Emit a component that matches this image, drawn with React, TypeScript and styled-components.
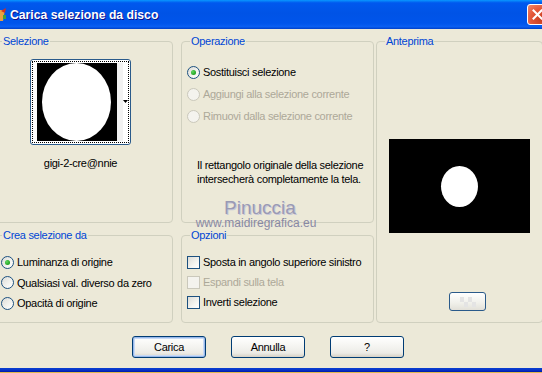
import React from "react";
import styled, { createGlobalStyle } from "styled-components";

const Global = createGlobalStyle`
  html, body { margin: 0; padding: 0; background: #ECE9D8; overflow: hidden; }
  body { width: 542px; height: 373px; font-family: "Liberation Sans", Arial, sans-serif; font-size: 11px; letter-spacing: -0.3px; color: #000; }
  * { box-sizing: border-box; }
`;

const Window = styled.div`
  width: 542px;
  height: 373px;
  display: flex;
  flex-direction: column;
`;

const TitleBar = styled.div`
  height: 29px;
  flex: none;
  display: flex;
  align-items: center;
  background: linear-gradient(#0997ff 0%, #0058ee 10%, #0053e6 45%, #0055eb 80%, #0a5ff2 92%, #0040c8 100%);
  overflow: hidden;
`;

const AppIcon = styled.svg`
  margin-left: -9px;
  flex: none;
`;

const Title = styled.div`
  margin-left: 3px;
  flex: 1;
  color: #fff;
  font-family: "Liberation Sans", Arial, sans-serif;
  font-weight: bold;
  font-size: 12.2px;
  letter-spacing: 0;
  text-shadow: 1px 1px 0 #0f1089;
`;

const CloseBtn = styled.div`
  width: 21px;
  height: 21px;
  margin-right: -6px;
  flex: none;
  border: 1px solid #fff;
  border-radius: 3px;
  background: radial-gradient(circle at 70% 75%, #c83e1f 0%, #e4583a 55%, #f08a6c 100%);
  display: flex;
  align-items: center;
  justify-content: center;
`;

const Body = styled.div`
  flex: 1;
  position: relative;
  padding-top: 6px;
`;

const GroupsRow = styled.div`
  display: flex;
`;

const Column = styled.div<{ $w: number; $ml: number }>`
  width: ${(p) => p.$w}px;
  margin-left: ${(p) => p.$ml}px;
  display: flex;
  flex-direction: column;
  gap: 6px;
  flex: none;
`;

const Group = styled.fieldset<{ $h: number; $pt?: number; $pl?: number }>`
  margin: 0;
  height: ${(p) => p.$h}px;
  border: 1px solid #d0d0bf;
  border-radius: 4px;
  padding: ${(p) => p.$pt ?? 0}px 0 0 ${(p) => p.$pl ?? 0}px;
  min-width: 0;
`;

const Legend = styled.legend`
  color: #0046d5;
  margin-left: 8px;
  padding: 0 1px;
  line-height: 13px;
  font-size: 11px;
`;

const ThumbWrap = styled.div`
  width: 101px;
  margin-left: 36px;
  display: flex;
  flex-direction: column;
  align-items: center;
`;

const Thumb = styled.div`
  width: 101px;
  height: 86px;
  border: 1px solid #2a5a8a;
  border-radius: 3px;
  background: #fff;
  padding: 1px;
`;

const Focus = styled.div`
  width: 97px;
  height: 82px;
  border: 1px dotted #000;
`;

const ThumbName = styled.div`
  margin-top: 11px;
  line-height: 14px;
`;

const OptRow = styled.label<{ $h: number; $disabled?: boolean }>`
  display: flex;
  align-items: center;
  gap: 3px;
  height: ${(p) => p.$h}px;
  color: ${(p) => (p.$disabled ? "#aca899" : "#000")};
  white-space: nowrap;
`;

const Radio = styled.span<{ $checked?: boolean; $disabled?: boolean }>`
  width: 13px;
  height: 13px;
  flex: none;
  border-radius: 50%;
  border: 1px solid ${(p) => (p.$disabled ? "#cac8bb" : "#1c5180")};
  background: ${(p) =>
    p.$disabled ? "#f4f3ee" : "linear-gradient(135deg, #dcdcd7 0%, #f4f4f0 60%, #ffffff 100%)"};
  display: flex;
  align-items: center;
  justify-content: center;
  &::after {
    content: "";
    display: ${(p) => (p.$checked ? "block" : "none")};
    width: 5px;
    height: 5px;
    border-radius: 50%;
    background: radial-gradient(circle at 35% 35%, #5ed85e 0%, #21a121 70%);
  }
`;

const Check = styled.span<{ $disabled?: boolean }>`
  width: 13px;
  height: 13px;
  flex: none;
  border: 1px solid ${(p) => (p.$disabled ? "#cac8bb" : "#1c5180")};
  background: ${(p) =>
    p.$disabled ? "#f4f3ee" : "linear-gradient(135deg, #dcdcd7 0%, #f4f4f0 60%, #ffffff 100%)"};
`;

const Description = styled.div`
  margin-top: 31px;
  margin-left: 15px;
  line-height: 14px;
`;

const OptList = styled.div<{ $pl: number }>`
  padding-left: ${(p) => p.$pl}px;
`;

const Preview = styled.svg`
  display: block;
  margin: 91px 0 0 12px;
`;

const SmallBtn = styled.div`
  width: 37px;
  height: 19px;
  margin: 59px 0 0 72px;
  border: 1px solid #2a5a8a;
  border-radius: 3px;
  background: linear-gradient(#ffffff, #f0f0ea 60%, #e2e0d8);
  display: flex;
  align-items: center;
  justify-content: center;
`;

const ButtonRow = styled.div`
  display: flex;
  gap: 25px;
  margin: 13px 0 0 132px;
`;

const Button = styled.button<{ $default?: boolean }>`
  width: 74px;
  height: 22px;
  padding: 0;
  font-family: "Liberation Sans", Arial, sans-serif;
  font-size: 11px;
  letter-spacing: -0.3px;
  color: #000;
  border: 1px solid #003c74;
  border-radius: 3px;
  background: linear-gradient(#ffffff 0%, #f6f6f3 40%, #ecebe6 80%, #d6d0c5 100%);
  box-shadow: ${(p) => (p.$default ? "inset 0 0 0 1px #98b8ea, inset 0 0 0 2px #c8daf5" : "none")};
`;

const Watermark = styled.div`
  position: absolute;
  left: 195px;
  top: 169px;
  display: flex;
  flex-direction: column;
  align-items: center;
  width: 122px;
  pointer-events: none;
  letter-spacing: 0;
`;

const WmName = styled.div`
  font-family: "Liberation Sans", Arial, sans-serif;
  font-size: 19px;
  line-height: 20px;
  color: #9a9ab4;
  text-shadow: 1px 1px 0 #c8c8d8;
  margin-left: 8px;
`;

const WmSite = styled.div`
  font-family: "Liberation Sans", Arial, sans-serif;
  font-size: 12px;
  line-height: 11px;
  color: #8888a4;
`;

const BottomFrame = styled.div`
  height: 5px;
  flex: none;
  background: linear-gradient(#0a3fd0 0%, #0733c8 40%, #0019a8 80%, #e0b850 80%, #e0b850 100%);
`;

export default function App() {
  return (
    <Window>
      <Global />
      <TitleBar>
        <AppIcon width="16" height="16" viewBox="0 0 16 16">
          <path d="M2 3 L14 3 L12 14 L4 14 Z" fill="#e8a040" />
          <path d="M10 4 L15 1 L14 6 Z" fill="#d03020" />
          <rect x="12" y="8" width="3" height="4" fill="#3aa040" />
        </AppIcon>
        <Title>Carica selezione da disco</Title>
        <CloseBtn>
          <svg width="11" height="11" viewBox="0 0 11 11">
            <path d="M1.5 1.5 L9.5 9.5 M9.5 1.5 L1.5 9.5" stroke="#fff" strokeWidth="2" strokeLinecap="square" />
          </svg>
        </CloseBtn>
      </TitleBar>
      <Body>
        <GroupsRow>
          <Column $w={180} $ml={-7}>
            <Group $h={188} $pt={11}>
              <Legend>Selezione</Legend>
              <ThumbWrap>
                <Thumb>
                  <Focus>
                    <svg width="95" height="80" viewBox="0 0 95 80">
                      <rect x="4" y="1" width="80" height="78" fill="#000" />
                      <ellipse cx="43.5" cy="40" rx="34.5" ry="39" fill="#fff" />
                      <rect x="84" y="1" width="6" height="78" fill="#f2f2f2" />
                      <path d="M90 38 L95 38 L92.5 41 Z" fill="#000" />
                    </svg>
                  </Focus>
                </Thumb>
                <ThumbName>gigi-2-cre@nnie</ThumbName>
              </ThumbWrap>
            </Group>
            <Group $h={94} $pt={10}>
              <Legend>Crea selezione da</Legend>
              <OptList $pl={7}>
                <OptRow $h={20}>
                  <Radio $checked />
                  Luminanza di origine
                </OptRow>
                <OptRow $h={21}>
                  <Radio />
                  Qualsiasi val. diverso da zero
                </OptRow>
                <OptRow $h={20}>
                  <Radio />
                  Opacità di origine
                </OptRow>
              </OptList>
            </Group>
          </Column>
          <Column $w={193} $ml={8}>
            <Group $h={188} $pt={13}>
              <Legend>Operazione</Legend>
              <OptList $pl={5}>
                <OptRow $h={22}>
                  <Radio $checked />
                  Sostituisci selezione
                </OptRow>
                <OptRow $h={22} $disabled>
                  <Radio $disabled />
                  Aggiungi alla selezione corrente
                </OptRow>
                <OptRow $h={22} $disabled>
                  <Radio $disabled />
                  Rimuovi dalla selezione corrente
                </OptRow>
              </OptList>
              <Description>
                Il rettangolo originale della selezione
                <br />
                intersecherà completamente la tela.
              </Description>
            </Group>
            <Group $h={94} $pt={10}>
              <Legend>Opzioni</Legend>
              <OptList $pl={5}>
                <OptRow $h={20}>
                  <Check />
                  Sposta in angolo superiore sinistro
                </OptRow>
                <OptRow $h={20} $disabled>
                  <Check $disabled />
                  Espandi sulla tela
                </OptRow>
                <OptRow $h={20}>
                  <Check />
                  Inverti selezione
                </OptRow>
              </OptList>
            </Group>
          </Column>
          <Column $w={167} $ml={2}>
            <Group $h={288}>
              <Legend>Anteprima</Legend>
              <Preview width="141" height="94" viewBox="0 0 141 94">
                <rect width="141" height="94" fill="#000" />
                <ellipse cx="70.5" cy="47.5" rx="18.5" ry="20.5" fill="#fff" />
              </Preview>
              <SmallBtn>
                <svg width="16" height="10" viewBox="0 0 16 10">
                  <rect x="0" y="0" width="4" height="5" fill="#e4e4e4" />
                  <rect x="8" y="0" width="4" height="5" fill="#e4e4e4" />
                  <rect x="4" y="5" width="4" height="5" fill="#e4e4e4" />
                  <rect x="12" y="5" width="4" height="5" fill="#e4e4e4" />
                </svg>
              </SmallBtn>
            </Group>
          </Column>
        </GroupsRow>
        <ButtonRow>
          <Button $default>Carica</Button>
          <Button>Annulla</Button>
          <Button>?</Button>
        </ButtonRow>
        <Watermark>
          <WmName>Pinuccia</WmName>
          <WmSite>www.maidiregrafica.eu</WmSite>
        </Watermark>
      </Body>
      <BottomFrame />
    </Window>
  );
}
